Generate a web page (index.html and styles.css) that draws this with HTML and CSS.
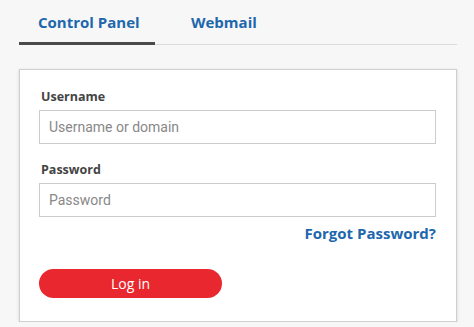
FILE: index.html
```html
<!DOCTYPE html>
<html lang="en">
<head>
    <meta charset="UTF-8">
    <meta name="viewport" content="width=device-width, initial-scale=1.0">
    <title>Login</title>
    <link rel="stylesheet" href="styles.css">
</head>
<body>
<div class="wrapper">
    <div class="tabs">
        <a class="tab active" href="#">Control Panel</a>
        <a class="tab" href="#">Webmail</a>
    </div>
    <form class="login-box">
        <label for="username">Username</label>
        <input type="text" id="username" placeholder="Username or domain">
        <label for="password">Password</label>
        <input type="password" id="password" placeholder="Password">
        <div class="forgot"><a href="#">Forgot Password?</a></div>
        <button type="submit" class="login-button">Log in</button>
    </form>
</div>
</body>
</html>
```

FILE: styles.css
```css
body {
    font-family: "Open Sans", Arial, sans-serif;
    background-color: #f7f7f7;
    margin: 0;
    padding: 0;
}

.wrapper {
    width: 438px;
    margin-left: 19px;
}

.tabs {
    display: flex;
    border-bottom: 1px solid #dcdcdc;
    height: 44px;
}

.tab {
    display: block;
    box-sizing: border-box;
    height: 45px;
    padding-top: 12px;
    font-size: 15px;
    font-weight: 700;
    color: #1d67ad;
    text-decoration: none;
}

.tab.active {
    width: 136px;
    padding-left: 19px;
    border-bottom: 3px solid #4a4a4a;
}

.tab + .tab {
    margin-left: 36px;
}

.login-box {
    margin-top: 24px;
    background-color: #fff;
    border: 1px solid #cfcfcf;
    box-shadow: 0 1px 3px rgba(0, 0, 0, 0.15);
    padding: 18px 20px 21px 19px;
    height: 212px;
}

.login-box label {
    display: block;
    padding-left: 2px;
    font-size: 12.5px;
    font-weight: 700;
    color: #444;
    margin-bottom: 5px;
}

.login-box input {
    display: block;
    box-sizing: border-box;
    width: 100%;
    height: 34px;
    padding: 0 9px;
    border: 1px solid #cccccc;
    font-family: Roboto, Arial, sans-serif;
    font-size: 14px;
    color: #333;
    margin-bottom: 17px;
}

.login-box input::placeholder {
    color: #888;
}

#password {
    margin-bottom: 5px;
}

.forgot {
    text-align: right;
}

.forgot a {
    font-size: 15px;
    font-weight: 700;
    color: #1d67ad;
    text-decoration: none;
}

.login-button {
    display: block;
    margin-top: 25px;
    width: 183px;
    height: 29px;
    border: none;
    border-radius: 15px;
    background-color: #e8282e;
    color: #fff;
    font-family: "Open Sans", Arial, sans-serif;
    font-size: 14px;
    cursor: pointer;
}
```
